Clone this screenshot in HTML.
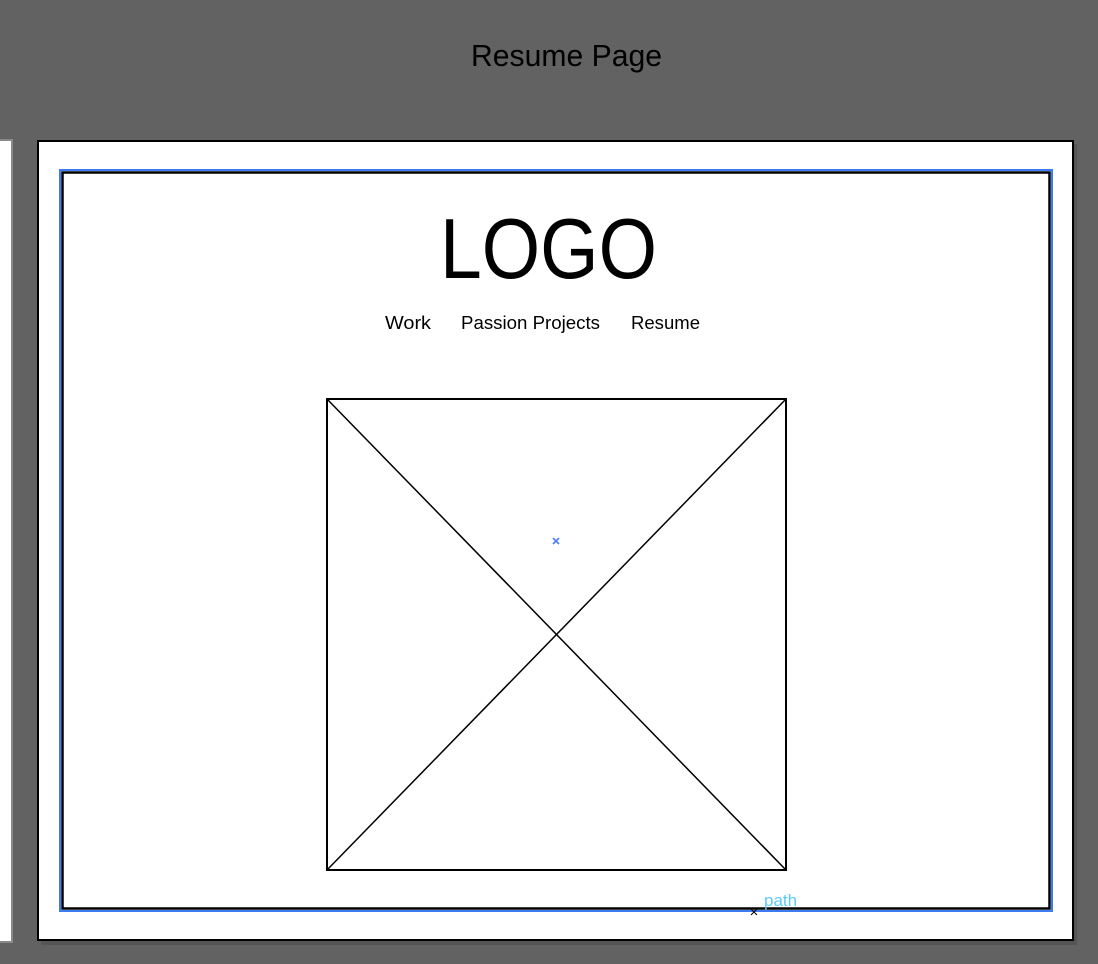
<!DOCTYPE html>
<html><head><meta charset="utf-8"><style>
html,body{margin:0;padding:0;width:1098px;height:964px;overflow:hidden;background:#626262;}
svg{display:block}
</style></head><body>
<svg width="1098" height="964" viewBox="0 0 1098 964" xmlns="http://www.w3.org/2000/svg" font-family="Liberation Sans, sans-serif">
<rect x="0" y="0" width="1098" height="964" fill="#626262"/>
<text x="471" y="66" font-size="31" fill="#000" textLength="191" lengthAdjust="spacingAndGlyphs">Resume Page</text>
<rect x="-2" y="140" width="14" height="802" fill="#fff" stroke="#8a8a8a" stroke-width="2"/>
<rect x="41" y="144" width="1036" height="801" fill="#555"/>
<rect x="38" y="141" width="1035" height="799" fill="#fff" stroke="#000" stroke-width="2"/>
<rect x="60" y="170" width="992" height="741" fill="none" stroke="#3d7bf2" stroke-width="2"/>
<rect x="62.5" y="172.5" width="987" height="736" fill="none" stroke="#000" stroke-width="2.5"/>
<text x="440" y="278" font-size="85" fill="#000" textLength="217" lengthAdjust="spacingAndGlyphs">LOGO</text>
<text x="385" y="329" font-size="18" fill="#000" textLength="46" lengthAdjust="spacingAndGlyphs">Work</text>
<text x="461" y="329" font-size="18" fill="#000" textLength="139" lengthAdjust="spacingAndGlyphs">Passion Projects</text>
<text x="631" y="329" font-size="18" fill="#000" textLength="69" lengthAdjust="spacingAndGlyphs">Resume</text>
<rect x="327" y="399" width="459" height="471" fill="none" stroke="#000" stroke-width="2"/>
<line x1="327" y1="399" x2="786" y2="870" stroke="#000" stroke-width="1.5"/>
<line x1="786" y1="399" x2="327" y2="870" stroke="#000" stroke-width="1.5"/>
<path d="M553 538 L559 544 M559 538 L553 544" stroke="#4a80f5" stroke-width="1.6"/>
<path d="M751 909 L757 915 M757 909 L751 915" stroke="#000" stroke-width="1"/>
<text x="764" y="906" font-size="17" fill="#5ccaf8">path</text>
</svg>
</body></html>
